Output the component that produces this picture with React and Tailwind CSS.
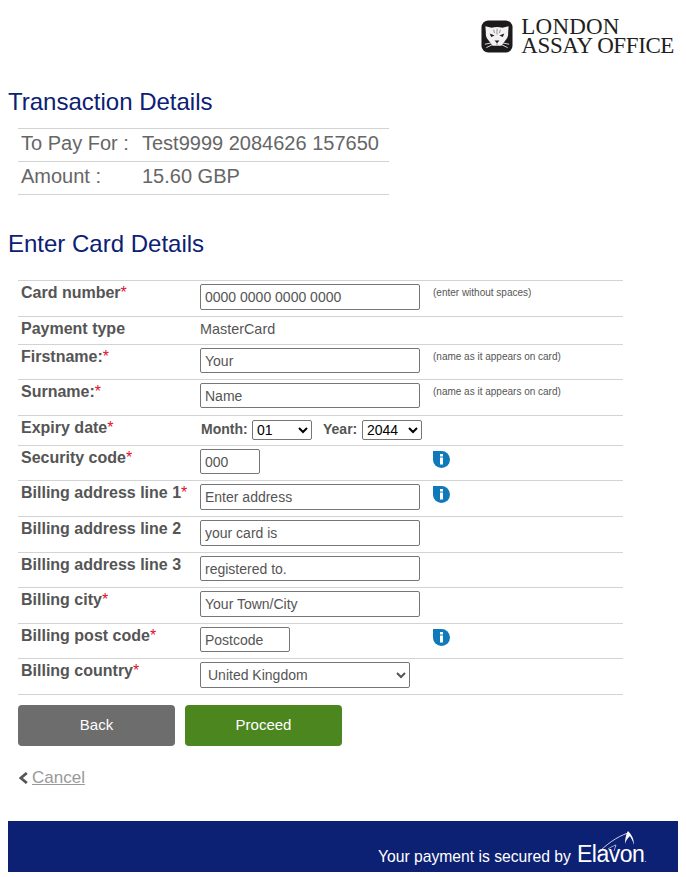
import React from 'react';

const arial = '"Liberation Sans", Arial, sans-serif';

function Lion() {
  return (
    <svg width="32" height="33" viewBox="0 0 33 34">
      <rect x="0.5" y="0.5" width="32" height="33" rx="7" fill="#1d1a1b" />
      {/* cabeza */}
      <path
        d="M4.500 6.500l6.500 1.500c3.500-1 7.500-1 11 0l6.500-1.500-.5 6.500c.5 3.500-1 6.500-3.500 9l-3.500 4.500h-9l-3.500-4.500c-2.500-2.500-4-5.500-3.500-9z"
        fill="#f2f2f2"
      />
      <path d="M9 14l5 2-3.500 1.500zM24 14l-5 2 3.500 1.500z" fill="#1d1a1b" />
      <path d="M14 21h5l-2.500 3z" fill="#1d1a1b" />
      <path d="M16.500 9v6M13 10l1 3.500M20 10l-1 3.500M16.500 24v2" stroke="#777" strokeWidth="0.8" fill="none" />
      <path
        d="M11 23.500l-7 1.500M11.500 25.500l-6 3M22 23.500l7 1.500M21.500 25.500l6 3"
        stroke="#f2f2f2"
        strokeWidth="0.9"
        fill="none"
      />
    </svg>
  );
}

function InfoIcon() {
  return (
    <svg width="17" height="17" viewBox="0 0 17 17" className="block">
      <path d="M0 0h8.500a8.500 8.500 0 1 1-8.500 8.500z" fill="#0f79ba" />
      <rect x="7" y="3" width="3" height="2.500" fill="#fff" />
      <rect x="7" y="6.500" width="3" height="7" fill="#fff" />
    </svg>
  );
}

function Req() {
  return <span className="text-[#e0102a] font-normal">*</span>;
}

function Field({ value, width, height }) {
  return (
    <input
      readOnly
      defaultValue={value}
      className={`${width} ${height} border border-[#767676] rounded-[2px] px-[4px] text-[14px] text-[#555555] bg-white`}
    />
  );
}

function Row({ label, required, height, children, hint, info }) {
  return (
    <div className={`flex border-t border-[#d3d3d3] ${height}`}>
      <div className="w-[182px] pl-[3px] pt-[3px] shrink-0 text-[16px] leading-[18px] font-bold text-[#555555]">
        {label}
        {required && <Req />}
      </div>
      <div className="w-[233px] pt-[3px] shrink-0">{children}</div>
      {hint && <div className="text-[10px] leading-[11px] pt-[6px] text-[#555555]">{hint}</div>}
      {info && (
        <div className="pt-[5px]">
          <InfoIcon />
        </div>
      )}
    </div>
  );
}

function Select({ value, options, className }) {
  return (
    <select
      defaultValue={value}
      className={`border border-[#767676] rounded-[2px] bg-white ${className}`}
    >
      {options.map((o) => (
        <option key={o}>{o}</option>
      ))}
    </select>
  );
}

export default function App() {
  return (
    <div className="w-[686px] h-[877px] bg-white px-[8px] overflow-hidden" style={{ fontFamily: arial }}>
      {/* logo */}
      <div className="flex justify-end items-start h-[84px] pt-[18px] pr-[4px]">
        <div className="mt-[2px] mr-[8px]">
          <Lion />
        </div>
        <div
          className="text-[#231f20] text-[23px] leading-[18.500px]"
          style={{ fontFamily: '"Liberation Serif", "Times New Roman", serif' }}
        >
          <div className="tracking-[0.2px]">LONDON</div>
          <div className="tracking-[-0.4px]">ASSAY OFFICE</div>
        </div>
      </div>

      <h2 className="text-[24px] leading-[28px] text-[#0c2074] h-[34px] pt-[4px] box-content">Transaction Details</h2>
      <div className="ml-[10px] mt-[6px] w-[371px] text-[20px] leading-[24px] text-[#666666] border-b border-[#d3d3d3]">
        <div className="flex h-[33px] items-center pb-[4px] border-t border-[#d3d3d3] pl-[3px]">
          <div className="w-[121px]">To Pay For :</div>
          <div>Test9999 2084626 157650</div>
        </div>
        <div className="flex h-[33px] items-center pb-[4px] border-t border-[#d3d3d3] pl-[3px]">
          <div className="w-[121px]">Amount :</div>
          <div>15.60 GBP</div>
        </div>
      </div>

      <h2 className="text-[24px] leading-[28px] text-[#0c2074] mt-[35px]">Enter Card Details</h2>

      <div className="ml-[10px] mt-[22px] w-[605px] border-b border-[#d3d3d3]">
        <Row label="Card number" required height="h-[36px]" hint="(enter without spaces)">
          <Field value="0000 0000 0000 0000" width="w-[220px]" height="h-[26px]" />
        </Row>
        <Row label="Payment type" height="h-[28px]">
          <div className="text-[14.400px] leading-[18px] text-[#555555]">MasterCard</div>
        </Row>
        <Row label="Firstname:" required height="h-[35px]" hint="(name as it appears on card)">
          <Field value="Your" width="w-[220px]" height="h-[25px]" />
        </Row>
        <Row label="Surname:" required height="h-[36px]" hint="(name as it appears on card)">
          <Field value="Name" width="w-[220px]" height="h-[25px]" />
        </Row>
        <Row label="Expiry date" required height="h-[30px]">
          <div className="flex items-center whitespace-nowrap text-[14px] font-bold text-[#555555] pl-[1px]">
            <span className="w-[51px]">Month:</span>
            <Select value="01" options={['01', '02', '03']} className="w-[60px] h-[20px] text-[14px] font-normal text-black" />
            <span className="ml-[11px] w-[39px]">Year:</span>
            <Select value="2044" options={['2044', '2045']} className="w-[60px] h-[20px] text-[14px] font-normal text-black" />
          </div>
        </Row>
        <Row label="Security code" required height="h-[35px]" info>
          <Field value="000" width="w-[60px]" height="h-[25px]" />
        </Row>
        <Row label="Billing address line 1" required height="h-[36px]" info>
          <Field value="Enter address" width="w-[220px]" height="h-[26px]" />
        </Row>
        <Row label="Billing address line 2" height="h-[36px]">
          <Field value="your card is" width="w-[220px]" height="h-[26px]" />
        </Row>
        <Row label="Billing address line 3" height="h-[35px]">
          <Field value="registered to." width="w-[220px]" height="h-[25px]" />
        </Row>
        <Row label="Billing city" required height="h-[36px]">
          <Field value="Your Town/City" width="w-[220px]" height="h-[26px]" />
        </Row>
        <Row label="Billing post code" required height="h-[35px]" info>
          <Field value="Postcode" width="w-[90px]" height="h-[25px]" />
        </Row>
        <Row label="Billing country" required height="h-[36px]">
          <Select
            value="United Kingdom"
            options={['United Kingdom', 'Ireland']}
            className="w-[210px] h-[26px] text-[14px] text-[#555555] pl-[3px]"
          />
        </Row>
      </div>

      <div className="ml-[10px] mt-[10px] flex gap-[10px]">
        <button className="w-[157px] h-[41px] rounded-[4px] bg-[#6d6d6d] text-white text-[15px]">Back</button>
        <button className="w-[157px] h-[41px] rounded-[4px] bg-[#4c861f] text-white text-[15px]">Proceed</button>
      </div>

      <div className="ml-[11px] mt-[22px] flex items-center h-[20px] text-[17px]">
        <svg width="9" height="12" viewBox="0 0 9 12" className="mr-[4px]">
          <path d="M7.800 1L1.800 6l6 5" stroke="#555555" strokeWidth="2.800" fill="none" />
        </svg>
        <span className="text-[#999999] underline">Cancel</span>
      </div>

      <div className="mt-[33px] h-[51px] bg-[#0c2074] flex items-baseline justify-end pr-[32px] pt-[23px] text-white">
        <span className="text-[15.700px] leading-[18px] mr-[6px]">Your payment is secured by</span>
        <div className="relative text-[23px] leading-[20px] tracking-[-0.5px]">
          Elavon<span className="text-[8px]">.</span>
          <svg width="44" height="32" viewBox="0 0 44 32" className="absolute right-[6px] top-[-15px]" fill="none">
            <path d="M2 24C10 16 20 8 32 4" stroke="#fff" strokeWidth="0.8" />
            <path d="M12 20c3-2 5-3 8-4M20 16l-2 6" stroke="#fff" strokeWidth="0.6" />
            <path d="M29 15c0-5 1-10 3-13 3 3 6 7 6 14-1-4-3-7-4-9-2 2-4 4-5 8z" fill="#fff" />
          </svg>
        </div>
      </div>
    </div>
  );
}
